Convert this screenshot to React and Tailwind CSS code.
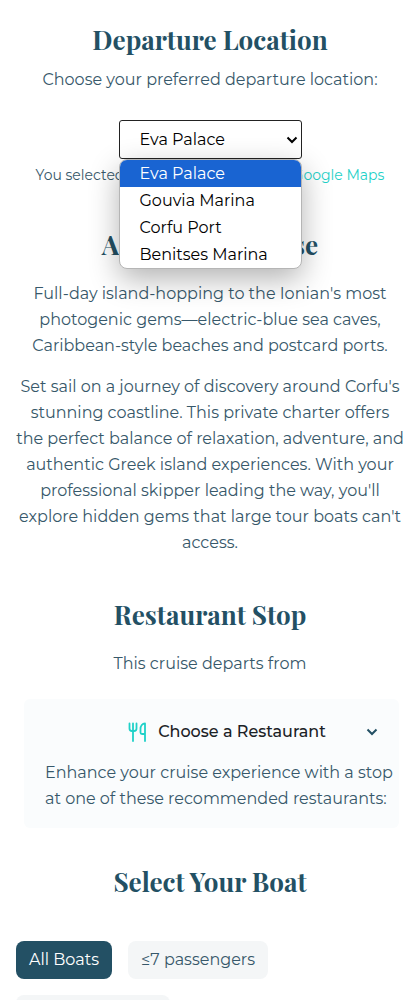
import { useState } from "react";

const ports = ["Eva Palace", "Gouvia Marina", "Corfu Port", "Benitses Marina"];
const filters = ["All Boats", "≤7 passengers", "8-10 passengers"];

function Heading({ children }) {
  return (
    <h2 className="text-center font-['Playfair_Display','Liberation_Serif',serif] text-[26px] leading-9 font-bold text-[#235064]">
      {children}
    </h2>
  );
}

function Chevron({ className }) {
  return (
    <svg viewBox="0 0 12 8" fill="none" stroke="currentColor" strokeWidth="2" className={className} aria-hidden="true">
      <path d="M1.5 1.5 6 6l4.500-4.500" />
    </svg>
  );
}

function Cutlery() {
  return (
    <svg viewBox="0 0 20 20" fill="none" stroke="currentColor" strokeWidth="1.800" strokeLinecap="round" strokeLinejoin="round" className="h-5 w-5 text-[#1fd1c8]" aria-hidden="true">
      <path d="M1.500 1.500v5c0 1.700 1 2.500 2.500 2.500h2c1.500 0 2.500-.8 2.500-2.500v-5M5 1.500V19M17 19V1.500c-2.600 0-4.500 2.200-4.500 5.500v3.500c0 1 .5 1.500 1.500 1.500h3" />
    </svg>
  );
}

function Departure() {
  const [port, setPort] = useState(ports[0]);
  return (
    <section className="flex flex-col items-center">
      <Heading>Departure Location</Heading>
      <label htmlFor="port" className="mt-[9px] leading-[26px]">
        Choose your preferred departure location:
      </label>
      <div className="relative mt-[27px] w-[183px]">
        <select
          id="port"
          value={port}
          onChange={(e) => setPort(e.target.value)}
          className="h-[39px] w-full appearance-none rounded-[3px] border border-[#222] bg-white pl-5 text-black outline-none"
        >
          {ports.map((p) => (
            <option key={p}>{p}</option>
          ))}
        </select>
        <Chevron className="pointer-events-none absolute top-4 right-1 h-2 w-3 text-black" />
        <ul
          role="listbox"
          aria-label="Departure location"
          className="absolute inset-x-0 top-full z-10 overflow-hidden rounded-lg border border-[#b5b5b5] bg-white text-black shadow-[0_10px_30px_rgba(0,0,0,0.3)]"
        >
          {ports.map((p) => (
            <li
              key={p}
              role="option"
              aria-selected={p === port}
              onClick={() => setPort(p)}
              className="pl-5 leading-[27px] aria-selected:bg-[#1964d2] aria-selected:text-white"
            >
              {p}
            </li>
          ))}
        </ul>
      </div>
      <p className="mt-1 text-sm leading-6 whitespace-nowrap">
        You selected: {port} – View it on{" "}
        <a href="#map" className="text-[#1fd1c8]">
          Google Maps
        </a>
      </p>
    </section>
  );
}

export default function App() {
  const [filter, setFilter] = useState(filters[0]);
  return (
    <main className="bg-white px-4 pt-[22px] font-['Montserrat','Inter',sans-serif] text-base font-normal text-[#37586a]">
      <Departure />

      <section className="mt-10 text-center leading-[26px]">
        <Heading>About This Cruise</Heading>
        <p className="mt-[18px]">
          Full-day island-hopping to the Ionian's most photogenic gems—electric-blue sea caves, Caribbean-style beaches
          and postcard ports.
        </p>
        <p className="mt-[15px]">
          Set sail on a journey of discovery around Corfu's stunning coastline. This private charter offers the perfect
          balance of relaxation, adventure, and authentic Greek island experiences. With your professional skipper
          leading the way, you'll explore hidden gems that large tour boats can't access.
        </p>
      </section>

      <section className="mt-[41px]">
        <Heading>Restaurant Stop</Heading>
        <p className="mt-[18px] text-center leading-[26px]">This cruise departs from</p>
        <div className="mr-[5px] ml-2 mt-[22px] rounded-md bg-[#fafcfd] pt-5 pb-4 leading-[26px]">
          <button type="button" aria-expanded="true" className="flex w-full items-center pr-[21px] font-medium text-[#1b2226]">
            <span className="flex flex-1 items-center justify-center gap-[10px] pl-16">
              <Cutlery />
              Choose a Restaurant
            </span>
            <Chevron className="h-2 w-3 text-[#235064]" />
          </button>
          <p className="mt-[15px] pl-[21px]">
            Enhance your cruise experience with a stop at one of these recommended restaurants:
          </p>
        </div>
      </section>

      <section className="mt-9">
        <Heading>Select Your Boat</Heading>
        <div className="mt-[41px] flex flex-wrap gap-4">
          {filters.map((f) => (
            <button
              key={f}
              type="button"
              aria-pressed={f === filter}
              onClick={() => setFilter(f)}
              className="h-[38px] rounded-lg bg-[#f4f6f7] px-[13px] aria-pressed:bg-[#235064] aria-pressed:text-white"
            >
              {f}
            </button>
          ))}
        </div>
      </section>
    </main>
  );
}
